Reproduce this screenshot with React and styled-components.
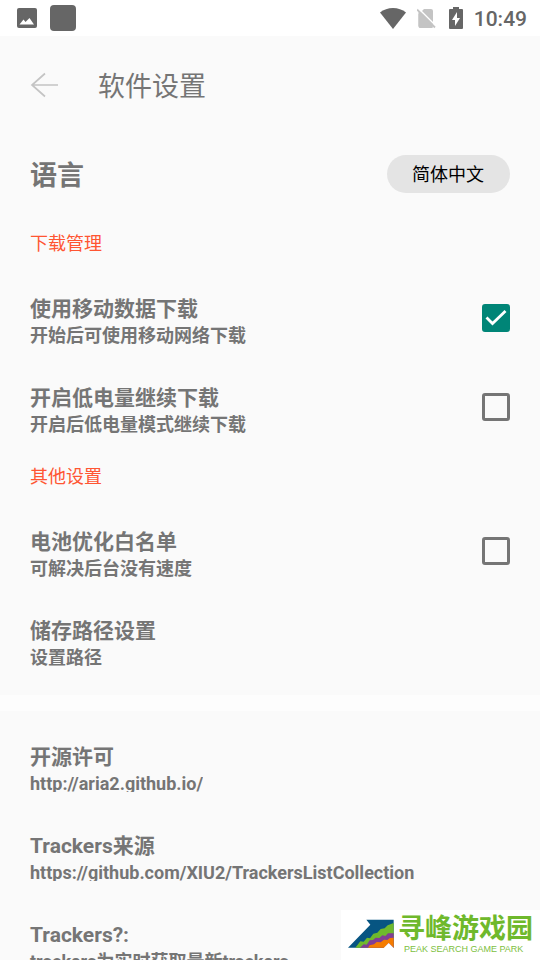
import React, { useState } from 'react'
import styled, { createGlobalStyle } from 'styled-components'

const GlobalStyle = createGlobalStyle`
  body {
    margin: 0;
    background: #fafafa;
    color: #757575;
    font-family: Roboto, "Noto Sans CJK SC", sans-serif;
  }
`

const Screen = styled.div`
  display: flex;
  flex-direction: column;
  height: 100vh;
`

const StatusBar = styled.div`
  display: flex;
  flex: none;
  align-items: center;
  height: 36px;
  padding: 0 13px 0 17px;
  background: #fff;
  color: #666;
`

const StatusGroup = styled.div`
  display: flex;
  align-items: center;
  gap: ${props => props.$gap};
  margin-left: ${props => (props.$end ? 'auto' : '0')};
`

const AppBadge = styled.span`
  width: 26px;
  height: 26px;
  border-radius: 4px;
  background: #666;
`

const Clock = styled.time`
  padding-top: 2px;
  font-size: 21px;
  font-weight: 500;
  line-height: 34px;
`

const Content = styled.main`
  flex: 1;
  min-height: 0;
  overflow-y: auto;
  scrollbar-width: none;
`

const Header = styled.header`
  display: flex;
  align-items: flex-start;
  gap: 39px;
  padding: 30px 30px 22px;
`

const BackButton = styled.button`
  display: flex;
  padding: 6px 0;
  border: 0;
  background: none;
  color: #c4c4c4;
`

const PageTitle = styled.h1`
  margin: 0;
  font-size: 27px;
  font-weight: 400;
  line-height: 42px;
`

const Section = styled.section`
  padding-bottom: 10px;
`

const SectionTitle = styled.h2`
  margin: 0;
  padding: 0 30px 5px;
  color: #ff5532;
  font-size: 18px;
  font-weight: 400;
  line-height: 50px;
`

const Row = styled.div`
  display: flex;
  align-items: center;
  justify-content: space-between;
  padding: 19px 30px;
`

const LanguageRow = styled(Row)`
  align-items: flex-start;
  padding: 25px 30px 22px;
`

const LanguageTitle = styled.div`
  font-size: 27px;
  font-weight: 700;
  line-height: 42px;
`

const LanguageButton = styled.button`
  height: 38px;
  padding: 2px 26px 0 25px;
  border: 0;
  border-radius: 19px;
  background: #e4e4e4;
  color: #000;
  font: 400 18px/36px Roboto, "Noto Sans CJK SC", sans-serif;
`

const RowText = styled.div`
  min-width: 0;
`

const RowTitle = styled.label`
  display: block;
  font-size: 21px;
  font-weight: 700;
  line-height: 32px;
`

const RowHint = styled.div`
  height: 19px;
  overflow: ${props => (props.$clip ? 'hidden' : 'visible')};
  font-size: 18px;
  font-weight: 700;
  line-height: 22px;
  white-space: nowrap;
`

const HintLink = styled.a`
  color: inherit;
  text-decoration: none;
`

const CheckWrap = styled.span`
  display: grid;
  flex: none;
  padding-bottom: 1px;

  > * {
    grid-area: 1 / 1;
  }

  svg {
    pointer-events: none;
  }
`

const CheckInput = styled.input`
  appearance: none;
  width: 28px;
  height: 28px;
  margin: 0;
  border: 3px solid #757575;
  border-radius: 3px;

  &:checked {
    border-color: #008577;
    background: #008577;
  }
`

const Divider = styled.div`
  height: 16px;
  margin-bottom: 11px;
  background: #fdfdfd;
`

const Watermark = styled.div`
  position: fixed;
  right: 0;
  bottom: 0;
  display: flex;
  box-sizing: border-box;
  gap: 4px;
  height: 50px;
  padding: 0 7px;
  background: #fff;
  color: #6fb92c;

  svg {
    margin-top: 9px;
  }
`

const Brand = styled.div`
  padding-top: 3px;
  font-size: 27px;
  font-weight: 700;
  line-height: 32px;
`

const BrandLatin = styled.div`
  padding-left: 6px;
  color: #7cc040;
  font-family: "Liberation Sans", sans-serif;
  font-size: 9px;
  line-height: 9px;
`

const PictureIcon = () => (
  <svg width="20" height="20" viewBox="0 0 20 20">
    <rect width="20" height="20" rx="2" fill="currentColor" />
    <path d="M2.500 16.500l4-5 2 2.500 4-4 4.500 6.500z" fill="#fff" />
  </svg>
)

const WifiIcon = () => (
  <svg width="26" height="21" viewBox="0 0 26 21">
    <path d="M0 4.500C7-1.500 19-1.500 26 4.500L13 21z" fill="currentColor" />
  </svg>
)

const NoSimIcon = () => (
  <svg width="21" height="21" viewBox="1 0 21 21">
    <path d="M8 1H15q2 0 2 2v13.500L5 4zM2.500 5.500L17 20H4.500q-2 0-2-2z" fill="#c4c4c4" />
    <path d="M2.500 4v14q0 2 2 2H15q2 0 2-2V10z" fill="#c4c4c4" />
    <path d="M3 1l18 18" stroke="#fff" strokeWidth="1.600" />
    <path d="M1 1.500l18 18" stroke="#c4c4c4" strokeWidth="1.800" />
  </svg>
)

const BatteryIcon = () => (
  <svg width="14" height="22" viewBox="0 0 14 22">
    <path d="M4 0h6v2h3q1 0 1 1v18q0 1-1 1H1q-1 0-1-1V3q0-1 1-1h3z" fill="currentColor" />
    <path d="M8 5L3 13h3v6l5-8H8z" fill="#fff" />
  </svg>
)

const BackIcon = () => (
  <svg width="29" height="26" viewBox="0 0 29 26" fill="none" stroke="currentColor" strokeWidth="1.700">
    <path d="M28 13H2M15 1.500L2 13l13 11.500" />
  </svg>
)

const CheckIcon = () => (
  <svg width="28" height="28" viewBox="0 0 28 28" fill="none" stroke="#fff" strokeWidth="2.800">
    <path d="M4.500 13.500l6 6L23.500 7" />
  </svg>
)

const PeakLogo = () => (
  <svg width="46" height="30" viewBox="0 0 138 90">
    <path d="M55 2h82v84H0l67-69z" fill="#075582" />
    <path d="M22 86l15-19 10 1 10-12 9 2 10-14 12-3 10-11 12-2 9-9 18-7v74z" fill="#6fb92c" />
    <path d="M36 86l11-10 9 1 9-13 10-1 8-7 11 1 9-8 9 2 8-8h17v43z" fill="#813e94" />
    <path d="M60 86l5-7 13-3 8-7 12 1 10-8 10 1 8-6 11-1v30l-15-14-12 14z" fill="#f57c00" />
    <path d="M107 87l15-15 15 15z" fill="#fff" />
  </svg>
)

const Checkbox = ({ id, defaultChecked }) => {
  const [checked, setChecked] = useState(Boolean(defaultChecked))

  return (
    <CheckWrap>
      <CheckInput
        id={id}
        type="checkbox"
        checked={checked}
        onChange={e => setChecked(e.target.checked)}
      />
      {checked && <CheckIcon />}
    </CheckWrap>
  )
}

const CheckRow = ({ id, title, hint, defaultChecked }) => (
  <Row>
    <RowText>
      <RowTitle htmlFor={id}>{title}</RowTitle>
      <RowHint>{hint}</RowHint>
    </RowText>
    <Checkbox id={id} defaultChecked={defaultChecked} />
  </Row>
)

const InfoRow = ({ title, hint, href }) => (
  <Row>
    <RowText>
      <RowTitle as="div">{title}</RowTitle>
      <RowHint $clip={Boolean(href)}>
        {href ? <HintLink href={href}>{href}</HintLink> : hint}
      </RowHint>
    </RowText>
  </Row>
)

const App = () => (
  <Screen>
    <GlobalStyle />
    <StatusBar>
      <StatusGroup $gap="13px">
        <PictureIcon />
        <AppBadge />
      </StatusGroup>
      <StatusGroup $gap="11px" $end>
        <WifiIcon />
        <NoSimIcon />
        <BatteryIcon />
        <Clock>10:49</Clock>
      </StatusGroup>
    </StatusBar>
    <Content>
      <Header>
        <BackButton aria-label="返回">
          <BackIcon />
        </BackButton>
        <PageTitle>软件设置</PageTitle>
      </Header>
      <Section>
        <LanguageRow>
          <LanguageTitle>语言</LanguageTitle>
          <LanguageButton>简体中文</LanguageButton>
        </LanguageRow>
        <SectionTitle>下载管理</SectionTitle>
        <CheckRow id="mobile-data" title="使用移动数据下载" hint="开始后可使用移动网络下载" defaultChecked />
        <CheckRow id="low-battery" title="开启低电量继续下载" hint="开启后低电量模式继续下载" />
        <SectionTitle>其他设置</SectionTitle>
        <CheckRow id="whitelist" title="电池优化白名单" hint="可解决后台没有速度" />
        <InfoRow title="储存路径设置" hint="设置路径" />
      </Section>
      <Divider />
      <InfoRow title="开源许可" href="http://aria2.github.io/" />
      <InfoRow title="Trackers来源" href="https://github.com/XIU2/TrackersListCollection" />
      <InfoRow title="Trackers?:" hint="trackers为实时获取最新trackers" />
    </Content>
    <Watermark>
      <PeakLogo />
      <div>
        <Brand>寻峰游戏园</Brand>
        <BrandLatin>PEAK SEARCH GAME PARK</BrandLatin>
      </div>
    </Watermark>
  </Screen>
)

export default App
